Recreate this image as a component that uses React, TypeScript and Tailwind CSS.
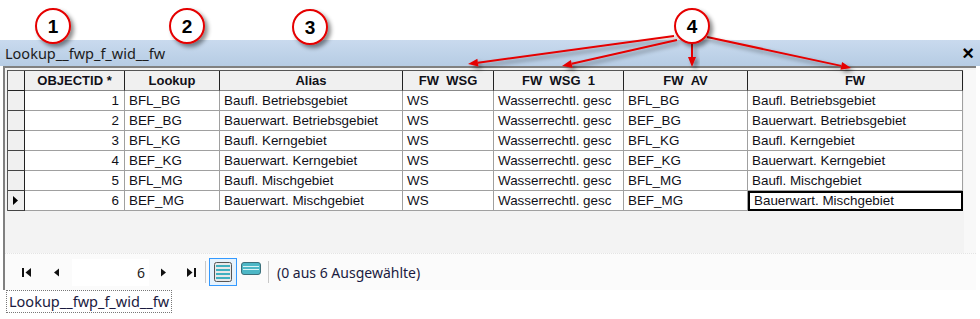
import React from "react";

const cols = ["OBJECTID *", "Lookup", "Alias", "FW_WSG", "FW_WSG_1", "FW_AV", "FW"];

const rows = [
  ["1", "BFL_BG", "Baufl. Betriebsgebiet", "WS", "Wasserrechtl. gesc", "BFL_BG", "Baufl. Betriebsgebiet"],
  ["2", "BEF_BG", "Bauerwart. Betriebsgebiet", "WS", "Wasserrechtl. gesc", "BEF_BG", "Bauerwart. Betriebsgebiet"],
  ["3", "BFL_KG", "Baufl. Kerngebiet", "WS", "Wasserrechtl. gesc", "BFL_KG", "Baufl. Kerngebiet"],
  ["4", "BEF_KG", "Bauerwart. Kerngebiet", "WS", "Wasserrechtl. gesc", "BEF_KG", "Bauerwart. Kerngebiet"],
  ["5", "BFL_MG", "Baufl. Mischgebiet", "WS", "Wasserrechtl. gesc", "BFL_MG", "Baufl. Mischgebiet"],
  ["6", "BEF_MG", "Bauerwart. Mischgebiet", "WS", "Wasserrechtl. gesc", "BEF_MG", "Bauerwart. Mischgebiet"],
];

// underscores in the headers don't show in the original grid
function HeaderLabel({ text }: { text: string }) {
  const parts = text.split("_");
  return (
    <>
      {parts.map((p, i) => (
        <React.Fragment key={i}>
          {i > 0 && <span className="text-transparent">_</span>}
          {p}
        </React.Fragment>
      ))}
    </>
  );
}

function Annotations() {
  const circles = [
    { n: "1", x: 53, y: 26 },
    { n: "2", x: 187, y: 26 },
    { n: "3", x: 310, y: 27 },
    { n: "4", x: 692, y: 26 },
  ];
  const arrows = [
    { x1: 674, y1: 36, x2: 468, y2: 64 },
    { x1: 677, y1: 40, x2: 562, y2: 66 },
    { x1: 692, y1: 44, x2: 692, y2: 67 },
    { x1: 707, y1: 37, x2: 851, y2: 68 },
  ];
  return (
    <svg className="pointer-events-none absolute left-0 top-0" width={980} height={319}>
      <defs>
        <filter id="sh" x="-50%" y="-50%" width="200%" height="200%">
          <feDropShadow dx="3" dy="3" stdDeviation="2" floodColor="#000" floodOpacity="0.45" />
        </filter>
      </defs>
      {arrows.map((a, i) => {
        const dx = a.x2 - a.x1;
        const dy = a.y2 - a.y1;
        const len = Math.hypot(dx, dy);
        const ux = dx / len;
        const uy = dy / len;
        const bx = a.x2 - ux * 10;
        const by = a.y2 - uy * 10;
        const px = -uy * 4;
        const py = ux * 4;
        return (
          <g key={i} filter="url(#sh)">
            <line x1={a.x1} y1={a.y1} x2={bx} y2={by} stroke="#e50000" strokeWidth={2} />
            <polygon
              points={`${a.x2},${a.y2} ${bx + px},${by + py} ${bx - px},${by - py}`}
              fill="#e50000"
            />
          </g>
        );
      })}
      {circles.map((c) => (
        <g key={c.n}>
          <circle cx={c.x} cy={c.y} r={17} fill="#fff" stroke="#e50000" strokeWidth={2} filter="url(#sh)" />
          <text
            x={c.x}
            y={c.y + 7}
            textAnchor="middle"
            fontFamily="'Liberation Sans', Arial, sans-serif"
            fontWeight="bold"
            fontSize={19}
            fill="#000"
          >
            {c.n}
          </text>
        </g>
      ))}
    </svg>
  );
}

function NavIcon({ kind }: { kind: "first" | "prev" | "next" | "last" }) {
  return (
    <svg width={11} height={11} viewBox="0 0 11 11">
      {kind === "first" && (
        <>
          <rect x={1} y={1} width={2} height={9} fill="#111" />
          <polygon points="10,1 10,10 4.5,5.5" fill="#111" />
        </>
      )}
      {kind === "prev" && <polygon points="8,1.5 8,9.5 3,5.5" fill="#111" />}
      {kind === "next" && <polygon points="3,1.5 3,9.5 8,5.5" fill="#111" />}
      {kind === "last" && (
        <>
          <polygon points="1,1 1,10 6.5,5.5" fill="#111" />
          <rect x={8} y={1} width={2} height={9} fill="#111" />
        </>
      )}
    </svg>
  );
}

function AllRecordsIcon() {
  return (
    <svg width={18} height={20} viewBox="0 0 18 20">
      <rect x={0.5} y={0.5} width={17} height={19} rx={2} fill="#e8e8e8" stroke="#555" />
      <rect x={2} y={3} width={14} height={2} fill="#3fb0c0" />
      <rect x={2} y={7} width={14} height={2} fill="#3fb0c0" />
      <rect x={2} y={11} width={14} height={2} fill="#3fb0c0" />
      <rect x={2} y={15} width={14} height={2} fill="#3fb0c0" />
    </svg>
  );
}

function SelectedIcon() {
  return (
    <svg width={20} height={13} viewBox="0 0 20 13">
      <rect x={0.5} y={0.5} width={19} height={12} rx={2.5} fill="#4cb7c6" stroke="#3b6f7a" />
      <rect x={2} y={4} width={16} height={1} fill="#d9f2f5" />
      <rect x={2} y={7} width={16} height={1} fill="#d9f2f5" />
    </svg>
  );
}

export default function App() {
  return (
    <div className="relative h-[319px] w-[980px] overflow-hidden bg-white font-['Liberation_Sans',Arial,sans-serif]">
      <div className="h-[40px]" />

      {/* title bar */}
      <div className="flex h-[26px] items-center justify-between bg-gradient-to-b from-[#c9daee] to-[#b6cce4] pl-[5px] pr-[6px]">
        <span className="font-['Noto_Sans',sans-serif] text-[14.5px] leading-none text-[#1c1c1c]">
          Lookup__fwp_f_wid__fw
        </span>
        <span className="text-[20px] font-bold leading-none text-black">×</span>
      </div>

      {/* grid panel */}
      <div className="ml-[3px] mr-[4px] border-l-[2px] border-t-[2px] border-[#808080] bg-[#f3f3f3]">
        <div className="flex h-[185px] pl-[2px] pt-[2px]">
          <div className="flex flex-col">
            <div className="grid grid-cols-[17px_100px_95px_183px_91px_130px_124px_215px] border-l border-t border-[#555] text-[13.4px] leading-none text-[#101018]">
              <div className="h-[20px] border-b border-r border-[#222] bg-[#f0f0f0]" />
              {cols.map((c) => (
                <div
                  key={c}
                  className="flex h-[20px] items-center justify-center border-b border-r border-b-[#888] border-r-[#222] bg-[#f0f0f0] text-[13px] font-bold"
                >
                  <HeaderLabel text={c} />
                </div>
              ))}
              {rows.map((r, ri) => (
                <React.Fragment key={ri}>
                  <div className="flex h-[20px] items-center justify-center border-b border-r border-b-[#444] border-r-[#222] bg-[#f0f0f0]">
                    {ri === 5 && (
                      <svg width={6} height={9} viewBox="0 0 6 9">
                        <polygon points="0,0 0,9 5,4.5" fill="#000" />
                      </svg>
                    )}
                  </div>
                  {r.map((v, ci) => {
                    const selected = ri === 5 && ci === 6;
                    return (
                      <div
                        key={ci}
                        className={`flex h-[20px] items-center overflow-hidden whitespace-nowrap bg-white ${
                          ci === 0 ? "justify-end pr-[5px]" : "pl-[4px]"
                        } ${
                          selected
                            ? "border-2 border-black pl-[2px]"
                            : "border-b border-r border-[#a0a0a0]"
                        }`}
                      >
                        {v}
                      </div>
                    );
                  })}
                </React.Fragment>
              ))}
            </div>
          </div>
          <div className="ml-[1px] w-[13px] bg-[#f8f8f8]" />
        </div>

        {/* toolbar */}
        <div className="flex h-[37px] items-center border-t border-dotted border-[#e4e4e4] bg-[#fbfbfb] pl-[16px] font-['Noto_Sans',sans-serif] text-[13px] text-[#1a1a40]">
          <NavIcon kind="first" />
          <div className="w-[19px]" />
          <NavIcon kind="prev" />
          <div className="ml-[10px] flex h-[27px] w-[77px] items-center justify-end bg-white pr-[4px] text-[14px] text-[#222]">
            6
          </div>
          <div className="w-[9px]" />
          <NavIcon kind="next" />
          <div className="w-[17px]" />
          <NavIcon kind="last" />
          <div className="ml-[8px] h-[22px] w-px bg-[#c8c8c8]" />
          <div className="ml-[3px] flex h-[28px] w-[28px] items-center justify-center border border-[#3399ff] bg-[#e6f2fc]">
            <AllRecordsIcon />
          </div>
          <div className="ml-[4px] -mt-[8px]">
            <SelectedIcon />
          </div>
          <div className="ml-[7px] h-[22px] w-px bg-[#c8c8c8]" />
          <span className="ml-[8px] text-[14px]">(0 aus 6 Ausgewählte)</span>
        </div>
      </div>

      {/* tab */}
      <div className="ml-[6px] inline-flex h-[23px] items-center border border-dotted border-[#777] bg-white px-[2px] font-['Noto_Sans',sans-serif] text-[14.5px] leading-none text-[#1a1a40]">
        Lookup__fwp_f_wid__fw
      </div>

      <Annotations />
    </div>
  );
}
